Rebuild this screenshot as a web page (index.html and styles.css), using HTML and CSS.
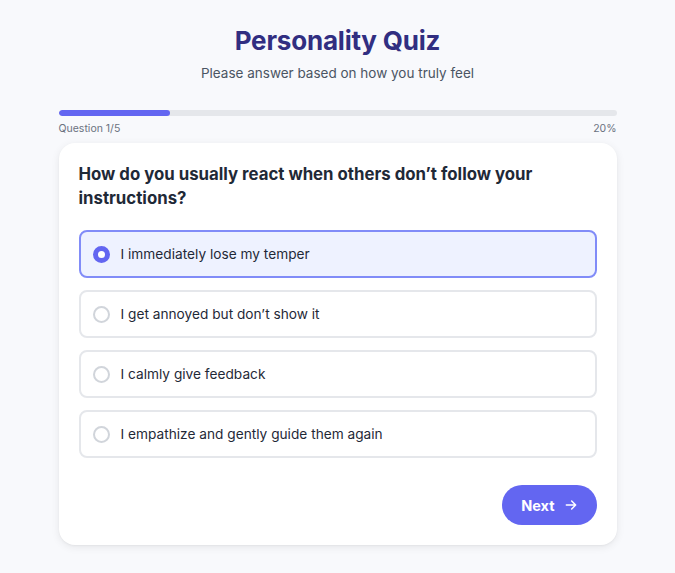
FILE: index.html
```html
<!DOCTYPE html>
<html>
<head>
<meta charset="utf-8">
<link rel="stylesheet" href="styles.css">
</head>
<body>
<div class="page">
  <header class="head">
    <h1 class="title">Personality Quiz</h1>
    <p class="subtitle">Please answer based on how you truly feel</p>
  </header>
  <div class="progress">
    <div class="track"><div class="fill" style="width:20%"></div></div>
    <div class="labels"><span>Question 1/5</span><span>20%</span></div>
  </div>
  <div class="card">
    <h2 class="question">How do you usually react when others don’t follow your instructions?</h2>
    <div class="options">
      <div class="option selected"><span class="radio"></span><span>I immediately lose my temper</span></div>
      <div class="option"><span class="radio"></span><span>I get annoyed but don’t show it</span></div>
      <div class="option"><span class="radio"></span><span>I calmly give feedback</span></div>
      <div class="option"><span class="radio"></span><span>I empathize and gently guide them again</span></div>
    </div>
    <div class="actions">
      <button class="next">Next
        <svg width="16" height="16" viewBox="0 0 24 24" fill="none" stroke="currentColor" stroke-width="2.2" stroke-linecap="round" stroke-linejoin="round"><path d="M5 12h14M13 6l6 6-6 6"/></svg>
      </button>
    </div>
  </div>
</div>
</body>
</html>
```

FILE: styles.css
```css
* { box-sizing: border-box; }
html, body { margin: 0; padding: 0; }
body {
  background: #f8f9fc;
  font-family: "Inter", "Noto Sans", sans-serif;
  width: 675px;
  height: 573px;
  overflow: hidden;
}
.page {
  width: 558px;
  margin: 0 auto;
  padding-top: 25px;
}
.head { text-align: center; }
.title {
  margin: 0;
  font-size: 26px;
  line-height: 32px;
  font-weight: 700;
  color: #312e81;
  letter-spacing: -0.2px;
}
.subtitle {
  margin: 6px 0 0;
  font-size: 13.5px;
  line-height: 20px;
  color: #4b5563;
}
.progress { margin-top: 27px; }
.track {
  height: 6px;
  background: #e5e7eb;
  border-radius: 3px;
  overflow: hidden;
}
.fill {
  height: 100%;
  background: #6366f1;
  border-radius: 3px;
}
.labels {
  display: flex;
  justify-content: space-between;
  margin-top: 6px;
  font-size: 10.5px;
  line-height: 14px;
  color: #6b7280;
}
.card {
  margin-top: 7px;
  background: #fff;
  border-radius: 16px;
  box-shadow: 0 2px 8px rgba(0,0,0,0.08), 0 1px 2px rgba(0,0,0,0.04);
  padding: 19px 20px 20px;
}
.question {
  margin: 0;
  font-size: 16.8px;
  line-height: 24px;
  font-weight: 700;
  color: #1f2937;
}
.options {
  margin-top: 20px;
  display: flex;
  flex-direction: column;
  gap: 12px;
}
.option {
  height: 48px;
  border: 2px solid #e5e7eb;
  border-radius: 8px;
  display: flex;
  align-items: center;
  gap: 11px;
  padding: 0 12px;
  font-size: 13.7px;
  color: #1f2937;
}
.option.selected {
  border-color: #818cf8;
  background: #eef2ff;
}
.radio {
  width: 17px;
  height: 17px;
  border-radius: 50%;
  border: 2px solid #d1d5db;
  background: #fff;
  flex: none;
}
.selected .radio {
  border: 5px solid #6366f1;
}
.actions {
  display: flex;
  justify-content: flex-end;
  margin-top: 27px;
}
.next {
  height: 40px;
  padding: 0 18px 0 19px;
  border: none;
  border-radius: 20px;
  background: #6366f1;
  color: #fff;
  font-family: inherit;
  font-size: 14.5px;
  font-weight: 700;
  display: flex;
  align-items: center;
  gap: 8px;
}
```
